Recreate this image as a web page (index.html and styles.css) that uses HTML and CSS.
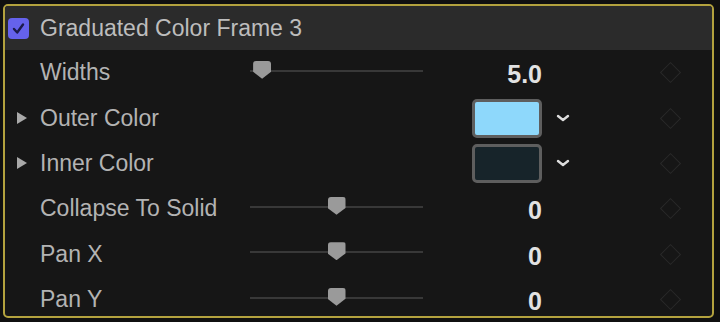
FILE: index.html
```html
<!DOCTYPE html>
<html lang="en">
<head>
  <meta charset="UTF-8">
  <title>Graduated Color Frame 3</title>
  <link rel="stylesheet" href="styles.css">
</head>
<body>
  <div class="panel">
    <div class="header">
      <span class="checkbox">
        <svg viewBox="0 0 21 21" width="21" height="21"><path d="M6 11 L9.2 14.5 L15 6.5" fill="none" stroke="#1c1b4d" stroke-width="2.4" stroke-linecap="round" stroke-linejoin="round"/></svg>
      </span>
      <span class="title">Graduated Color Frame 3</span>
    </div>

    <div class="row">
      <span class="disclosure"></span>
      <span class="label">Widths</span>
      <div class="slider"><span class="thumb" style="left: 7%"></span></div>
      <span class="value">5.0</span>
      <span class="menu"></span>
      <span class="keyframe"></span>
    </div>

    <div class="row">
      <span class="disclosure"><span class="tri"></span></span>
      <span class="label">Outer Color</span>
      <span></span>
      <span class="value"><span class="swatch outer"></span></span>
      <span class="menu"><svg viewBox="0 0 14 8" width="14" height="8"><path d="M2 2 L7 6 L12 2" fill="none" stroke="#dcdcdc" stroke-width="2.4" stroke-linecap="round" stroke-linejoin="round"/></svg></span>
      <span class="keyframe"></span>
    </div>

    <div class="row">
      <span class="disclosure"><span class="tri"></span></span>
      <span class="label">Inner Color</span>
      <span></span>
      <span class="value"><span class="swatch inner"></span></span>
      <span class="menu"><svg viewBox="0 0 14 8" width="14" height="8"><path d="M2 2 L7 6 L12 2" fill="none" stroke="#dcdcdc" stroke-width="2.4" stroke-linecap="round" stroke-linejoin="round"/></svg></span>
      <span class="keyframe"></span>
    </div>

    <div class="row">
      <span class="disclosure"></span>
      <span class="label">Collapse To Solid</span>
      <div class="slider"><span class="thumb" style="left: 50%"></span></div>
      <span class="value">0</span>
      <span class="menu"></span>
      <span class="keyframe"></span>
    </div>

    <div class="row">
      <span class="disclosure"></span>
      <span class="label">Pan X</span>
      <div class="slider"><span class="thumb" style="left: 50%"></span></div>
      <span class="value">0</span>
      <span class="menu"></span>
      <span class="keyframe"></span>
    </div>

    <div class="row">
      <span class="disclosure"></span>
      <span class="label">Pan Y</span>
      <div class="slider"><span class="thumb" style="left: 50%"></span></div>
      <span class="value">0</span>
      <span class="menu"></span>
      <span class="keyframe"></span>
    </div>
  </div>
</body>
</html>
```

FILE: styles.css
```css
body {
  margin: 0;
  background: #101010;
  font-family: "Liberation Sans", Arial, sans-serif;
  width: 720px;
  height: 322px;
  overflow: hidden;
}

.panel {
  margin: 4px 6px 0 3px;
  height: 310px;
  border: 2px solid #b3a23e;
  border-radius: 5px;
  background: #161616;
  overflow: hidden;
}

.header {
  height: 44px;
  background: #2b2b2b;
  display: flex;
  align-items: center;
  padding-left: 3px;
}

.checkbox {
  width: 21px;
  height: 21px;
  border-radius: 4px;
  background: #6562ec;
  display: flex;
}

.title {
  margin-left: 11px;
  font-size: 23px;
  color: #bdbdbd;
}

.row {
  height: 45.4px;
  display: grid;
  grid-template-columns: 35px 210px 173px 119px 40px 1fr;
  align-items: center;
}

.disclosure {
  display: flex;
  justify-content: flex-end;
  padding-right: 13px;
}

.tri {
  width: 0;
  height: 0;
  border-top: 6px solid transparent;
  border-bottom: 6px solid transparent;
  border-left: 10px solid #a9a9a9;
}

.label {
  font-size: 23px;
  color: #b3b3b3;
}

.slider {
  position: relative;
  height: 2px;
  margin-top: -4px;
  background: #383838;
}

.thumb {
  position: absolute;
  top: -9px;
  width: 18px;
  height: 18px;
  margin-left: -9px;
  background: #9a9a9a;
  border-radius: 3px 3px 0 0;
  clip-path: polygon(0 0, 100% 0, 100% 62%, 50% 100%, 0 62%);
}

.value {
  justify-self: end;
  font-size: 25px;
  font-weight: bold;
  color: #e2e2e2;
  padding-top: 4px;
}

.swatch {
  display: block;
  width: 64px;
  height: 33px;
  border: 3px solid #5e5e5e;
  border-radius: 5px;
  margin-top: -4px;
}

.swatch.outer { background: #8ed8fb; }
.swatch.inner { background: #17242a; }

.menu {
  padding-left: 14px;
  display: flex;
}

.keyframe {
  width: 13px;
  height: 13px;
  margin-left: 81px;
  border: 1.5px solid #292929;
  transform: rotate(45deg);
}
```
